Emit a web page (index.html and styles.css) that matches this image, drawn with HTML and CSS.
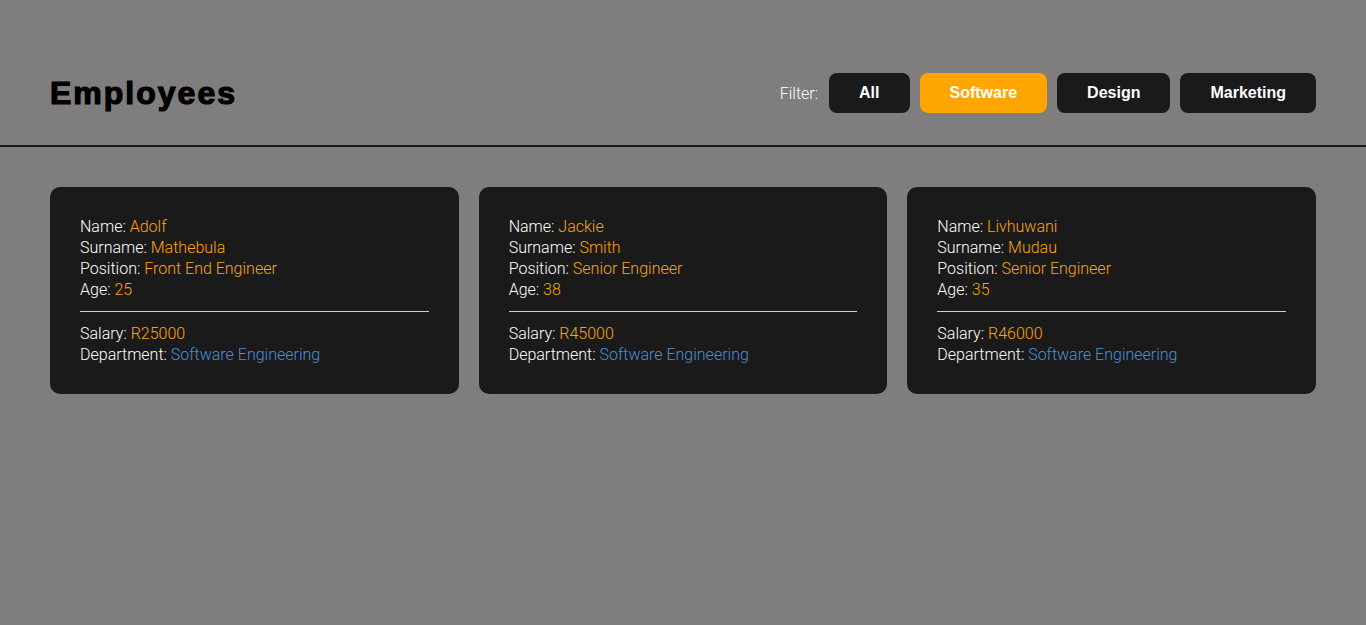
FILE: index.html
```html
<!DOCTYPE html>
<html>
<head>
<meta charset="utf-8">
<link rel="stylesheet" href="styles.css">
</head>
<body>
<header class="header">
  <h1 class="title">Employees</h1>
  <div class="filters">
    <span class="filter-label">Filter:</span>
    <button class="btn">All</button>
    <button class="btn active">Software</button>
    <button class="btn">Design</button>
    <button class="btn">Marketing</button>
  </div>
</header>
<main class="cards">
  <div class="card">
    <div class="row">Name: <span class="val">Adolf</span></div>
    <div class="row">Surname: <span class="val">Mathebula</span></div>
    <div class="row">Position: <span class="val">Front End Engineer</span></div>
    <div class="row">Age: <span class="val">25</span></div>
    <hr class="sep">
    <div class="row">Salary: <span class="val">R25000</span></div>
    <div class="row">Department: <span class="dept">Software Engineering</span></div>
  </div>
  <div class="card">
    <div class="row">Name: <span class="val">Jackie</span></div>
    <div class="row">Surname: <span class="val">Smith</span></div>
    <div class="row">Position: <span class="val">Senior Engineer</span></div>
    <div class="row">Age: <span class="val">38</span></div>
    <hr class="sep">
    <div class="row">Salary: <span class="val">R45000</span></div>
    <div class="row">Department: <span class="dept">Software Engineering</span></div>
  </div>
  <div class="card">
    <div class="row">Name: <span class="val">Livhuwani</span></div>
    <div class="row">Surname: <span class="val">Mudau</span></div>
    <div class="row">Position: <span class="val">Senior Engineer</span></div>
    <div class="row">Age: <span class="val">35</span></div>
    <hr class="sep">
    <div class="row">Salary: <span class="val">R46000</span></div>
    <div class="row">Department: <span class="dept">Software Engineering</span></div>
  </div>
</main>
</body>
</html>
```
FILE: styles.css
```css
* { box-sizing: border-box; }
html, body {
  margin: 0;
  padding: 0;
  background: #7f7d7e;
  font-family: "Liberation Sans", Arial, sans-serif;
  height: 100%;
}
.header {
  display: flex;
  align-items: center;
  justify-content: space-between;
  padding: 73px 50px 32px;
  border-bottom: 2px solid #1a1a1a;
}
.title {
  margin: 0;
  font-size: 32px;
  font-weight: 900;
  letter-spacing: 2px;
  -webkit-text-stroke: 1.2px #000;
  color: #000;
  line-height: 40px;
}
.filters {
  display: flex;
  align-items: center;
  gap: 10px;
}
.filter-label {
  color: #ffffff;
  font-family: Roboto, "Liberation Sans", sans-serif;
  font-weight: 300;
  font-size: 16px;
  margin-right: 1px;
}
.btn {
  height: 40px;
  padding: 0 30px;
  border: none;
  border-radius: 8px;
  background: #1a1a1a;
  color: #fff;
  font-family: "Liberation Sans", Arial, sans-serif;
  font-size: 16px;
  font-weight: bold;
  cursor: pointer;
}
.btn.active { background: #ffa500; }
.cards {
  display: grid;
  grid-template-columns: repeat(3, 1fr);
  gap: 20px;
  padding: 40px 50px 0;
}
.card {
  background: #1a1a1a;
  border-radius: 10px;
  padding: 29px 30px 29px;
  color: #fff;
  font-family: Roboto, "Liberation Sans", sans-serif;
  font-weight: 300;
  font-size: 16px;
  line-height: 21px;
}
.val { color: #ffa500; }
.dept { color: #4a90d9; }
.sep {
  border: none;
  border-top: 1px solid #cfcfcf;
  margin: 11px 0 11px;
  height: 0;
}
```
